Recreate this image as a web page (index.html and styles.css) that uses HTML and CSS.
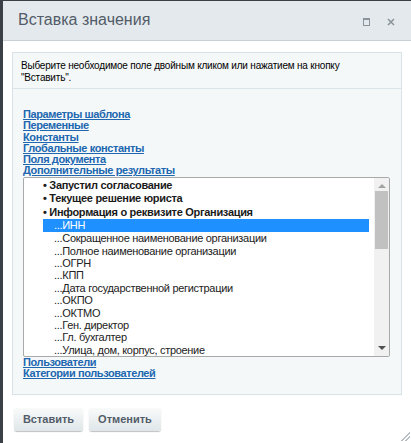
FILE: index.html
```html
<!DOCTYPE html>
<html lang="ru">
<head>
<meta charset="utf-8">
<title>Вставка значения</title>
<link rel="stylesheet" href="styles.css">
</head>
<body>
<div class="dialog">
  <div class="dlg-head">
    <div class="dlg-title">Вставка значения</div>
    <div class="dlg-icons">
      <span class="ico-max"></span>
      <svg class="ico-close" width="8" height="8" viewBox="0 0 8 8"><path d="M1 1L7 7M7 1L1 7" stroke="#8b949b" stroke-width="1.6"/></svg>
    </div>
  </div>
  <div class="dlg-body">
    <div class="panel">
      <div class="desc">Выберите необходимое поле двойным кликом или нажатием на кнопку "Вставить".</div>
      <div class="links">
        <a class="lnk" href="#">Параметры шаблона</a>
        <a class="lnk" href="#">Переменные</a>
        <a class="lnk" href="#">Константы</a>
        <a class="lnk" href="#">Глобальные константы</a>
        <a class="lnk" href="#">Поля документа</a>
        <a class="lnk" href="#">Дополнительные результаты</a>
        <div class="listbox">
          <div class="list">
            <div class="grp">• Запустил согласование</div>
            <div class="grp">• Текущее решение юриста</div>
            <div class="grp">• Информация о реквизите Организация</div>
            <div class="opt sel">...ИНН</div>
            <div class="opt">...Сокращенное наименование организации</div>
            <div class="opt">...Полное наименование организации</div>
            <div class="opt">...ОГРН</div>
            <div class="opt">...КПП</div>
            <div class="opt">...Дата государственной регистрации</div>
            <div class="opt">...ОКПО</div>
            <div class="opt">...ОКТМО</div>
            <div class="opt">...Ген. директор</div>
            <div class="opt">...Гл. бухгалтер</div>
            <div class="opt">...Улица, дом, корпус, строение</div>
          </div>
          <div class="sbar">
            <div class="arr arr-up"></div>
            <div class="thumb"></div>
            <div class="arr arr-down"></div>
          </div>
        </div>
        <a class="lnk" href="#">Пользователи</a>
        <a class="lnk" href="#">Категории пользователей</a>
      </div>
    </div>
    <div class="buttons">
      <button class="btn btn1">Вставить</button>
      <button class="btn btn2">Отменить</button>
    </div>
    <div class="grip"></div>
  </div>
</div>
</body>
</html>
```
FILE: styles.css
```css
html, body {
  margin: 0;
  padding: 0;
  height: 100%;
  overflow: hidden;
}
body {
  background: #3b4046;
  font-family: "Liberation Sans", Arial, sans-serif;
}
.dialog {
  margin: 1px 0 0 3px;
  background: #fff;
  height: 460px;
  display: flex;
  flex-direction: column;
}
.dlg-head {
  height: 39px;
  background: #e3e9ec;
  border-bottom: 1px solid #c9d1d5;
  display: flex;
  align-items: center;
  justify-content: space-between;
  padding: 0 0 0 15px;
}
.dlg-title {
  font-size: 16px;
  color: #535c69;
  margin-top: -1px;
}
.dlg-icons {
  display: flex;
  align-items: center;
  gap: 17px;
  padding-right: 16px;
  padding-top: 2px;
}
.ico-max {
  width: 5px;
  height: 5px;
  border: 1px solid #8b949b;
  border-top-width: 2px;
}
.dlg-body {
  padding: 11px 9px 0 9px;
  position: relative;
  flex: 1;
}
.panel {
  background: #f5f8f9;
  border: 1px solid #d8e2e7;
  height: 341px;
}
.desc {
  font-size: 10px;
  letter-spacing: -0.2px;
  line-height: 11.5px;
  color: #000;
  padding: 7px 20px 5px 8px;
  height: 23px;
  border-bottom: 1px solid #dbe4e9;
}
.links {
  padding: 20px 11px 0 10px;
  display: flex;
  flex-direction: column;
  align-items: flex-start;
}
.lnk {
  font-size: 11px;
  letter-spacing: -0.4px;
  line-height: 11.3px;
  font-weight: bold;
  color: #2067b0;
  text-decoration: underline;
}
.listbox {
  align-self: stretch;
  height: 178px;
  border: 1px solid #a9a9a9;
  border-radius: 2px;
  background: #fff;
  display: flex;
  overflow: hidden;
  margin-top: 0;
}
.list {
  flex: 1;
  padding: 1px 5px 0 19px;
  overflow: hidden;
  font-size: 11px;
  letter-spacing: -0.3px;
  color: #000;
}
.grp {
  font-weight: bold;
  height: 13.5px;
  line-height: 13.5px;
  color: #1a1a1a;
}
.opt {
  height: 12.4px;
  line-height: 12.4px;
  padding-left: 11px;
  white-space: nowrap;
  color: #222;
}
.opt.sel {
  background: #1e90ff;
  color: #fff;
  height: 13px;
  line-height: 13px;
}
.sbar {
  width: 15px;
  background: #f1f1f1;
  display: flex;
  flex-direction: column;
  align-items: center;
}
.thumb {
  width: 13px;
  height: 58px;
  background: #c1c1c1;
  margin-top: 3px;
}
.arr {
  width: 0;
  height: 0;
  border-left: 4px solid transparent;
  border-right: 4px solid transparent;
}
.arr-up {
  border-bottom: 4px solid #a3a3a3;
  margin-top: 6px;
}
.arr-down {
  border-top: 4px solid #505050;
  margin-top: auto;
  margin-bottom: 6px;
}
.buttons {
  display: flex;
  gap: 6px;
  padding: 12px 0 0 2px;
}
.btn {
  height: 24px;
  padding: 0;
  font-family: "Liberation Sans", Arial, sans-serif;
  font-size: 11px;
  font-weight: bold;
  color: #535c69;
  border: none;
  border-radius: 3px;
  background: linear-gradient(#fafbfb, #dfe6e9);
  box-shadow: 0 1px 1px rgba(0,0,0,0.25), inset 0 1px 0 #fff;
}
.btn1 {
  width: 69px;
}
.btn2 {
  width: 72px;
}
.grip {
  position: absolute;
  right: 1px;
  top: 391px;
  width: 9px;
  height: 9px;
  background: linear-gradient(135deg, transparent 50%, #b8bfc4 50%, #b8bfc4 60%, transparent 60%, transparent 70%, #b8bfc4 70%, #b8bfc4 80%, transparent 80%);
}
```
